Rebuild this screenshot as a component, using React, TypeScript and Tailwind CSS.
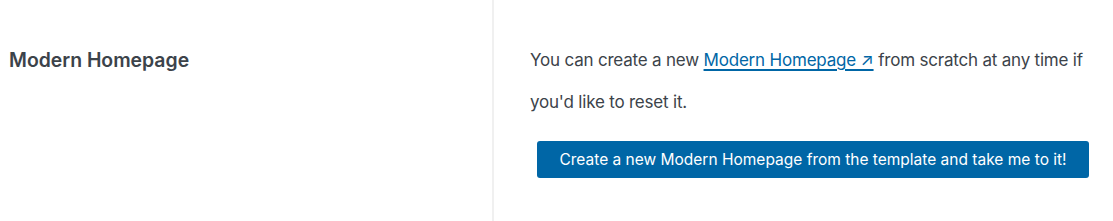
import React from 'react';

export default function App() {
  return (
    <div className="flex h-[221px] w-[1113px] bg-white font-['Inter',sans-serif] text-[#3c434a]">
      {/* label column */}
      <div className="w-[494px] shrink-0 border-r-2 border-[#f0f0f0] pl-[9px] pt-[46px]">
        <h2 className="text-[19.4px] font-semibold leading-[28px] text-[#3c434a]">Modern Homepage</h2>
      </div>

      {/* content column */}
      <div className="flex-1 pl-[36px] pt-[39px]">
        <p className="w-[562px] text-[17px] leading-[42px] tracking-[-0.2px] text-[#3c434a]">
          You can create a new{' '}
          <a href="#" className="text-[#0066a6] underline decoration-[1.5px] underline-offset-[3px]">
            Modern Homepage ↗
          </a>{' '}
          from scratch at any time if you'd like to reset it.
        </p>
        <button className="ml-[7px] mt-[18px] h-[37px] w-[552px] rounded-[3px] bg-[#0066a6] text-[15.5px] font-normal text-white">
          Create a new Modern Homepage from the template and take me to it!
        </button>
      </div>
    </div>
  );
}
